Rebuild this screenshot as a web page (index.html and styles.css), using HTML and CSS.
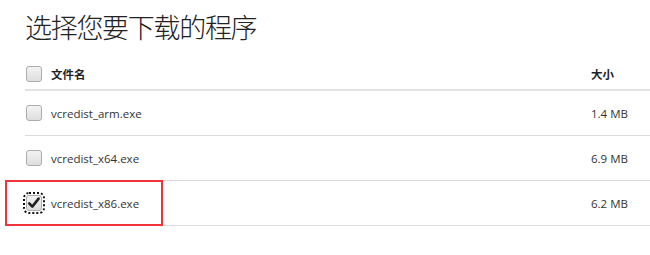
FILE: index.html
```html
<!DOCTYPE html>
<html>
<head>
<meta charset="utf-8">
<link rel="stylesheet" href="styles.css">
</head>
<body>
<div class="page">
  <h1 class="title">选择您要下载的程序</h1>
  <div class="table">
    <div class="row head">
      <span class="box"></span>
      <span class="name">文件名</span>
      <span class="size">大小</span>
    </div>
    <div class="row">
      <span class="box"></span>
      <span class="name">vcredist_arm.exe</span>
      <span class="size">1.4 MB</span>
    </div>
    <div class="row">
      <span class="box"></span>
      <span class="name">vcredist_x64.exe</span>
      <span class="size">6.9 MB</span>
    </div>
    <div class="row">
      <span class="box checked"><svg viewBox="0 0 16 16" width="16" height="16"><path d="M3.2 8.4 L6.3 11.6 L12.6 3.6" fill="none" stroke="#222" stroke-width="2.6" stroke-linecap="round" stroke-linejoin="round"/></svg></span>
      <span class="name">vcredist_x86.exe</span>
      <span class="size">6.2 MB</span>
    </div>
  </div>
  <div class="highlight"></div>
</div>
</body>
</html>
```
FILE: styles.css
```css
html, body {
  margin: 0;
  padding: 0;
  background: #fff;
}
.page {
  position: relative;
  width: 650px;
  height: 255px;
  padding-left: 25px;
  box-sizing: border-box;
  font-family: "Open Sans", "Noto Sans CJK SC", sans-serif;
  color: #333;
}
.title {
  margin: 0;
  padding-top: 9px;
  height: 59px;
  box-sizing: border-box;
  font-family: "Noto Sans CJK SC", sans-serif;
  font-weight: 300;
  font-size: 27px;
  line-height: 36px;
  color: #222;
  letter-spacing: -1.3px;
}
.table {
  display: flex;
  flex-direction: column;
}
.row {
  display: flex;
  align-items: center;
  height: 44px;
  border-bottom: 1px solid #dcdcdc;
  padding-right: 22px;
  font-size: 11.5px;
}
.row.head {
  height: 30px;
  border-bottom: 2px solid #e2e2e2;
  font-weight: bold;
  font-size: 11.5px;
  font-family: "Noto Sans CJK SC", sans-serif;
  color: #222;
}
.box {
  width: 16px;
  height: 16px;
  box-sizing: border-box;
  border: 1px solid #acacac;
  border-radius: 3px;
  background: linear-gradient(#f3f3f3, #dedede);
  margin-left: 1px;
  margin-right: 9px;
  flex: none;
  position: relative;
}
.box svg {
  position: absolute;
  left: -1px;
  top: -1px;
}
.box.checked {
  outline: 2px dotted #111;
  outline-offset: 1px;
}
.name {
  flex: 1;
}
.size {
  width: 37px;
  white-space: nowrap;
  text-align: left;
}
.highlight {
  position: absolute;
  left: 5px;
  top: 180px;
  width: 158px;
  height: 46px;
  box-sizing: border-box;
  border: 2px solid #f0353a;
}
```
